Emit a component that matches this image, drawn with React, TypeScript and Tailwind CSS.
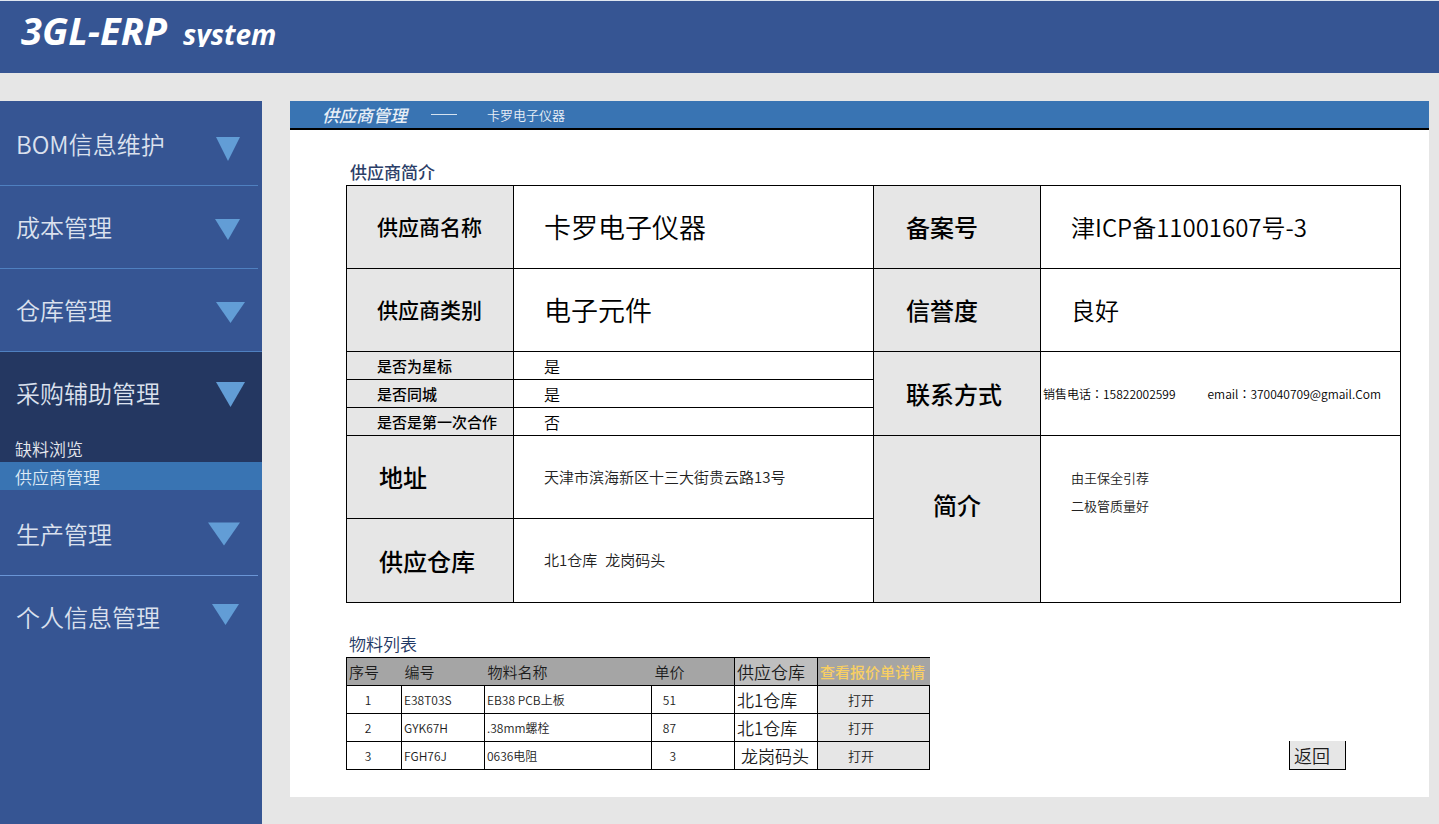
type MenuItem = { label: string; arrow: string };

const upperMenu: MenuItem[] = [
  { label: "BOM信息维护", arrow: "8,11 32,11 20,35" },
  { label: "成本管理", arrow: "7,10 32,10 20,31" },
  { label: "仓库管理", arrow: "8,10 37,10 22.5,31" },
];

const purchasing: MenuItem = { label: "采购辅助管理", arrow: "8,7 37,7 22.5,32" };

const lowerMenu: MenuItem[] = [
  { label: "生产管理", arrow: "0,6.5 32,6.5 16,29.5" },
  { label: "个人信息管理", arrow: "4,5 31,5 17.5,26" },
];

const materials = [
  { no: "1", code: "E38T03S", name: "EB38 PCB上板", price: "51", store: "北1仓库" },
  { no: "2", code: "GYK67H", name: ".38mm螺栓", price: "87", store: "北1仓库" },
  { no: "3", code: "FGH76J", name: "0636电阻", price: "3", store: "龙岗码头" },
];

function MenuButton({ item }: { item: MenuItem }) {
  return (
    <button
      type="button"
      className="flex h-[82px] w-full items-center justify-between pr-[17px] pl-4 text-left text-2xl font-[350] text-[#dbe1ee]"
    >
      <span>{item.label}</span>
      <svg width="37" height="36" viewBox="0 0 37 36" aria-hidden="true">
        <polygon points={item.arrow} fill="#629dd6" />
      </svg>
    </button>
  );
}

function Sidebar() {
  return (
    <nav className="w-[262px] shrink-0 bg-[#365593] pt-0.5">
      {upperMenu.map((item, i) => (
        <div key={item.label}>
          <MenuButton item={item} />
          <div className={i === 2 ? "h-px bg-[#4f80c0]" : "mr-1 h-px bg-[#4f80c0]"} />
        </div>
      ))}
      <div className="bg-[#243761]">
        <MenuButton item={purchasing} />
        <a href="#shortage" className="block h-7 pl-[15px] text-[17px] leading-[30px] font-[350] text-[#e4e7ee]">
          缺料浏览
        </a>
        <a
          href="#suppliers"
          className="block h-7 bg-[#3974b3] pl-[15px] text-[17px] leading-[30px] font-[350] text-[#dde9f5]"
        >
          供应商管理
        </a>
      </div>
      <div className="pt-[3px]">
        <MenuButton item={lowerMenu[0]} />
        <div className="mr-1 h-px bg-[#6a95d6]" />
        <MenuButton item={lowerMenu[1]} />
      </div>
    </nav>
  );
}

const label = "border border-black bg-[#e6e6e6] text-left font-medium";
const value = "border border-black pl-[30px] font-[350]";

function Colon() {
  return <span className="font-['Noto_Sans_CJK_TC',sans-serif]">：</span>;
}

function SupplierTable() {
  return (
    <table className="w-full table-fixed border-collapse text-black">
      <colgroup>
        <col className="w-[167px]" />
        <col />
        <col className="w-[167px]" />
        <col />
      </colgroup>
      <tbody>
        <tr className="h-[83px]">
          <th scope="row" className={`${label} pl-[30px] text-[21px]`}>供应商名称</th>
          <td className={`${value} text-[27px]`}>卡罗电子仪器</td>
          <th scope="row" className={`${label} pl-8 text-2xl`}>备案号</th>
          <td className={`${value} text-2xl`}>津ICP备11001607号-3</td>
        </tr>
        <tr className="h-[83px]">
          <th scope="row" className={`${label} pl-[30px] text-[21px]`}>供应商类别</th>
          <td className={`${value} text-[27px]`}>电子元件</td>
          <th scope="row" className={`${label} pl-8 text-2xl`}>信誉度</th>
          <td className={`${value} text-2xl`}>良好</td>
        </tr>
        <tr className="h-7">
          <th scope="row" className={`${label} pl-[30px] text-[15px] leading-5`}>是否为星标</th>
          <td className={`${value} text-base leading-5`}>是</td>
          <th scope="row" rowSpan={3} className={`${label} pl-8 text-2xl`}>联系方式</th>
          <td rowSpan={3} className="border border-black pl-0.5 text-xs font-[350] whitespace-nowrap">
            <span className="mr-8">销售电话<Colon />15822002599</span>
            <span>email<Colon />370040709@gmail.Com</span>
          </td>
        </tr>
        <tr className="h-7">
          <th scope="row" className={`${label} pl-[30px] text-[15px] leading-5`}>是否同城</th>
          <td className={`${value} text-base leading-5`}>是</td>
        </tr>
        <tr className="h-7">
          <th scope="row" className={`${label} pl-[30px] text-[15px] leading-5`}>是否是第一次合作</th>
          <td className={`${value} text-base leading-5`}>否</td>
        </tr>
        <tr className="h-[83px]">
          <th scope="row" className={`${label} pl-8 text-2xl`}>地址</th>
          <td className={`${value} text-[15px] text-[#222]`}>天津市滨海新区十三大街贵云路13号</td>
          <th
            scope="row"
            rowSpan={2}
            className="border border-black bg-[#e6e6e6] pb-7 text-center text-2xl font-medium"
          >
            简介
          </th>
          <td rowSpan={2} className={`${value} pt-7 align-top text-[13px] leading-7 text-[#222]`}>
            <p>由王保全引荐</p>
            <p>二极管质量好</p>
          </td>
        </tr>
        <tr className="h-[84px]">
          <th scope="row" className={`${label} pl-8 text-2xl`}>供应仓库</th>
          <td className={`${value} text-[15px] text-[#222]`}>
            <span className="mr-2">北1仓库</span>
            <span>龙岗码头</span>
          </td>
        </tr>
      </tbody>
    </table>
  );
}

function MaterialTable() {
  return (
    <table className="w-[583px] table-fixed border-collapse text-left text-[#1c1c1c]">
      <colgroup>
        <col className="w-[55px]" />
        <col className="w-[83px]" />
        <col className="w-[167px]" />
        <col className="w-[83px]" />
        <col className="w-[83px]" />
        <col className="w-[112px]" />
      </colgroup>
      <thead>
        <tr className="h-7 bg-[#a5a5a5] text-[15px] leading-5 whitespace-nowrap">
          <th scope="col" className="border-y border-l border-black pl-0.5 font-[350]">序号</th>
          <th scope="col" className="border-y border-black pl-[3px] font-[350]">编号</th>
          <th scope="col" className="border-y border-black pl-[3px] font-[350]">物料名称</th>
          <th scope="col" className="border-y border-black pl-[3px] font-[350]">单价</th>
          <th scope="col" className="border border-black bg-[#bfbfbf] pl-0.5 text-[17px] font-[350]">供应仓库</th>
          <th scope="col" className="border-y border-l border-black pl-0.5 font-medium text-[#f8cf63]">查看报价单详情</th>
        </tr>
      </thead>
      <tbody>
        {materials.map((m) => (
          <tr key={m.no} className="h-7 text-xs leading-5 font-[350] whitespace-nowrap">
            <td className="border border-black pr-3 text-center">{m.no}</td>
            <td className="border border-black pl-0.5">{m.code}</td>
            <td className="border border-black pl-0.5">{m.name}</td>
            <td className="border border-black pr-[58px] text-right">{m.price}</td>
            <td className={m.no === "3" ? "border border-black pl-1.5 text-[17px]" : "border border-black pl-0.5 text-[17px]"}>
              {m.store}
            </td>
            <td className="border border-black bg-[#e6e6e6] p-0">
              <button type="button" className="block w-full pl-[30px] text-left text-[13px] leading-5">
                打开
              </button>
            </td>
          </tr>
        ))}
      </tbody>
    </table>
  );
}

export default function App() {
  return (
    <div className="flex min-h-screen flex-col bg-[#e6e6e6] font-['Noto_Sans_CJK_SC',sans-serif]">
      <header className="h-[73px] border-t border-[#dfe6f0] bg-[#365593]">
        <h1 className="flex h-[46px] items-baseline gap-4 overflow-hidden pt-1 pl-[21px] font-['Open_Sans','Noto_Sans_CJK_SC',sans-serif] font-bold text-white italic">
          <span className="text-[38px] leading-[50px]">3GL-ERP</span>
          <span className="text-[28px] leading-[50px]">system</span>
        </h1>
      </header>
      <div className="flex flex-1 pt-7">
        <Sidebar />
        <main className="mr-2.5 mb-7 ml-7 flex-1 bg-white">
          <div className="flex h-[29px] items-center border-b-2 border-black bg-[#3974b3] pl-8 text-[#e8eff7]">
            <h2 className="text-[17px] font-medium italic">供应商管理</h2>
            <span className="ml-6 h-px w-[26px] bg-[#d5e2f0]" />
            <span className="ml-[30px] text-[13px] font-[350]">卡罗电子仪器</span>
          </div>
          <div className="pr-7 pb-[27px] pl-14">
            <h3 className="flex h-[55px] items-end pl-1 text-[17px] leading-[26px] font-medium text-[#2b3e68]">
              供应商简介
            </h3>
            <SupplierTable />
            <h3 className="flex h-[54px] items-end pl-[3px] text-[17px] leading-[26px] font-[350] text-[#1f3864]">
              物料列表
            </h3>
            <div className="flex items-end justify-between pr-[55px]">
              <MaterialTable />
              <button
                type="button"
                className="h-[29px] w-[57px] border-x border-b border-black bg-[#e6e6e6] pl-1 text-left text-lg leading-7 font-[350] text-[#1c1c1c]"
              >
                返回
              </button>
            </div>
          </div>
        </main>
      </div>
    </div>
  );
}
